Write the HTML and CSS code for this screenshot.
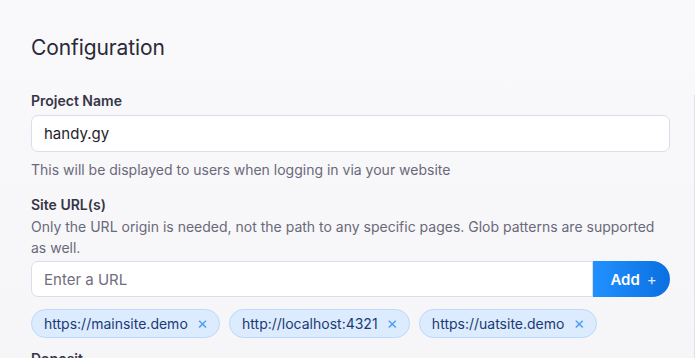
FILE: index.html
```html
<!DOCTYPE html>
<html lang="en">
<head>
<meta charset="utf-8">
<title>Configuration</title>
<link rel="stylesheet" href="styles.css">
</head>
<body>
<div class="page">
  <main class="config">
    <h1 class="title">Configuration</h1>

    <section class="field">
      <label class="label" for="pname">Project Name</label>
      <input id="pname" class="input" type="text" value="handy.gy">
      <p class="help">This will be displayed to users when logging in via your website</p>
    </section>

    <section class="field urls">
      <label class="label" for="url">Site URL(s)</label>
      <p class="desc">Only the URL origin is needed, not the path to any specific pages. Glob patterns are supported as well.</p>
      <div class="addrow">
        <input id="url" class="input url-input" type="text" placeholder="Enter a URL">
        <button class="add-btn" type="button">Add <span class="plus">+</span></button>
      </div>
      <ul class="tags">
        <li class="tag">https://mainsite.demo<span class="x">×</span></li>
        <li class="tag">http://localhost:4321<span class="x">×</span></li>
        <li class="tag">https://uatsite.demo<span class="x">×</span></li>
      </ul>
    </section>

    <section class="field last">
      <div class="label">Deposit</div>
    </section>
  </main>
  <aside class="side"></aside>
</div>
</body>
</html>
```

FILE: styles.css
```css
* { box-sizing: border-box; }
html, body {
  margin: 0;
  height: 100%;
  overflow: hidden;
}
body {
  background: linear-gradient(180deg, #f9f9fc 0%, #f6f6f9 100%);
  font-family: Inter, "Noto Sans", sans-serif;
  color: #2b2a3a;
}
.page {
  display: flex;
  height: 100%;
}
.config {
  width: 694px;
  padding: 34px 24px 0 31px;
  flex: none;
}
.side {
  flex: 1;
  margin-top: 95px;
  border-left: 1px solid #e2e1ea;
}
.title {
  margin: 0 0 29px;
  font-size: 21px;
  font-weight: 400;
  line-height: 28px;
  color: #2a2937;
  letter-spacing: -0.1px;
}
.field { display: flex; flex-direction: column; }
.label {
  font-size: 14px;
  font-weight: 600;
  line-height: 20px;
  color: #363545;
}
.input {
  font-family: inherit;
  font-size: 15px;
  color: #1f1e2b;
  background: #fff;
  border: 1px solid #dddce8;
  border-radius: 7px;
  height: 37px;
  padding: 0 12px;
  margin-top: 4px;
  outline: none;
}
.input::placeholder { color: #6f6e7e; }
.help {
  margin: 8px 0 0;
  font-size: 14px;
  line-height: 20px;
  color: #6a6979;
}
.urls { margin-top: 15px; }
.desc {
  margin: 1px 0 0;
  font-size: 14px;
  line-height: 21px;
  color: #6a6979;
}
.addrow {
  display: flex;
  margin-top: 3px;
}
.url-input {
  flex: 1;
  margin-top: 0;
  border-radius: 7px 0 0 7px;
  height: 36px;
}
.add-btn {
  width: 77px;
  height: 36px;
  border: none;
  border-radius: 0 18px 18px 0;
  background: linear-gradient(90deg, #2191ff 0%, #0b6fe0 100%);
  color: #fff;
  font-family: inherit;
  font-size: 15px;
  font-weight: 600;
  padding: 0 0 0 4px;
}
.plus {
  font-weight: 400;
  margin-left: 3px;
  opacity: 0.85;
}
.tags {
  list-style: none;
  margin: 12px 0 0;
  padding: 0;
  display: flex;
  gap: 9px;
}
.tag {
  height: 29px;
  display: flex;
  align-items: center;
  padding: 0 11px 0 12px;
  background: #dcecfe;
  border: 1px solid #b9d9fd;
  border-radius: 15px;
  color: #1b3a74;
  font-size: 14px;
  white-space: pre;
}
.x {
  color: #4b9cf2;
  font-size: 17px;
  line-height: 1;
  margin-left: 9px;
}
.last { margin-top: 11px; }
```
